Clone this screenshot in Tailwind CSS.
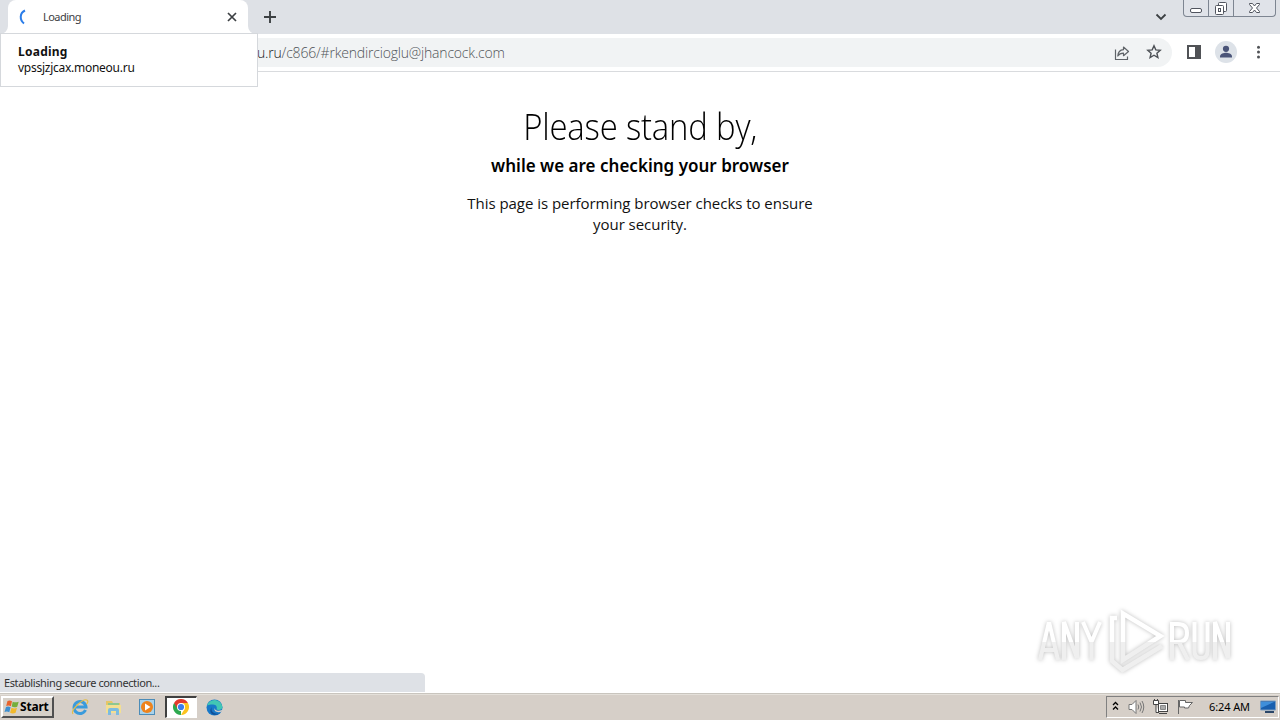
<!DOCTYPE html>
<html lang="en">
<head>
<meta charset="utf-8">
<title>Loading</title>
<script src="https://cdn.jsdelivr.net/npm/@tailwindcss/browser@4"></script>
</head>
<body class="h-[720px] w-[1280px] overflow-hidden bg-white font-[family-name:Open_Sans,sans-serif] text-black">
<div class="relative flex h-[720px] flex-col">
  <!-- Tab strip -->
  <header class="flex h-[34px] shrink-0 items-start bg-[#dee1e6] pl-2">
    <div class="relative flex h-[34px] w-60 items-center rounded-t-lg bg-white px-[10px]">
      <svg class="absolute bottom-0 -left-2" width="8" height="8"><path d="M8 0v8H0a8 8 0 0 0 8-8z" fill="#fff"/></svg>
      <svg class="absolute -right-2 bottom-0" width="8" height="8"><path d="M0 0v8h8a8 8 0 0 1-8-8z" fill="#fff"/></svg>
      <svg width="16" height="16" viewBox="0 0 16 16" fill="none"><path d="M7 1.500C1.500 4 1.500 11 6 14.500" stroke="#2b7de9" stroke-width="2"/></svg>
      <span class="ml-[9px] flex-1 font-[family-name:Noto_Sans,sans-serif] text-[11px] leading-4 tracking-[-0.55px] text-[#3c4043]">Loading</span>
      <svg width="12" height="12" viewBox="0 0 12 12"><path d="M2 2l8 8M10 2l-8 8" stroke="#3c4043" stroke-width="1.700"/></svg>
    </div>
    <svg class="mt-[10px] ml-[15px]" width="14" height="14"><path d="M7 1v12M1 7h12" stroke="#3c4043" stroke-width="1.900"/></svg>
    <div class="flex-1"></div>
    <svg class="mt-[12px] mr-[16px]" width="12" height="10" fill="none"><path d="M1.500 2.500L6 7l4.500-4.500" stroke="#3c4043" stroke-width="1.800"/></svg>
    <div class="mr-1 flex h-[17px] w-[93px] rounded-b-[4px] border border-t-0 border-[#7d8591] bg-[#e0e3e9]">
      <div class="flex w-[25px] items-end justify-center border-r border-[#7d8591] pb-[2px]"><svg width="13" height="6" fill="none"><rect x=".5" y=".5" width="11" height="4" rx="1.500" fill="#fff" stroke="#50545e"/></svg></div>
      <div class="flex w-[25px] items-center justify-center border-r border-[#7d8591] pt-px"><svg width="14" height="14" fill="#fff" stroke="#50545e"><rect x="4.500" y=".5" width="8" height="9" rx="1"/><rect x="1.500" y="3.500" width="8" height="9" rx="1"/><rect x="4.500" y="6.500" width="2" height="3"/></svg></div>
      <div class="flex flex-1 items-center justify-center"><svg width="13" height="12"><path d="M1.500 1.500h3l2 2.500 2-2.500h3v1L8.500 6l3 3.500v1h-3l-2-2.500-2 2.500h-3v-1L4.500 6l-3-3.500z" fill="#fff" stroke="#50545e"/></svg></div>
    </div>
  </header>

  <!-- Toolbar -->
  <div class="flex h-[38px] shrink-0 items-center border-b border-[#d9dbde] bg-white pr-[16px]">
    <div class="flex h-[29px] w-[1172px] items-center rounded-r-full bg-[#f1f3f4] pr-[10px] pl-[257px]">
      <div class="flex-1 text-[14px] font-light tracking-[-0.19px] whitespace-nowrap text-[#505458]"><span class="text-[#202124]">u.ru</span>/c866/#rkendircioglu@jhancock.com</div>
      <svg width="16" height="16" viewBox="0 0 16 16" fill="none" stroke="#5f6368" stroke-width="1.200"><path d="M1.500 4.500v10h12v-3M9.500 2l5 4.500-5 4.200V8.200C7 8.200 5 9 3.800 11 4 7.500 6 5 9.500 4.700z" stroke-linejoin="round"/></svg>
      <svg class="-mt-px ml-4" width="16" height="16" viewBox="0 0 16 16"><path d="M8 1.800l1.800 4.100 4.400.4-3.300 2.900 1 4.300L8 11.200 4.100 13.500l1-4.300-3.300-2.900 4.400-.4z" fill="none" stroke="#4d5156" stroke-width="1.400"/></svg>
    </div>
    <svg class="-mt-[2px] ml-[15px]" width="14" height="14"><path d="M0 0h14v14H0zM2 2v10h6V2z" fill="#505256" fill-rule="evenodd"/></svg>
    <svg class="-mt-[2px] ml-[14px]" width="22" height="22" viewBox="0 0 22 22"><circle cx="11" cy="11" r="11" fill="#dde2e8"/><circle cx="11" cy="7.800" r="3.100" fill="#4a5478"/><path d="M5 16.500v-1.300c0-2.500 4-3.500 6-3.500s6 1 6 3.500v1.300z" fill="#4a5478"/></svg>
    <svg class="-mt-px ml-[19px]" width="5" height="14" fill="#505256"><circle cx="2.500" cy="2.200" r="1.500"/><circle cx="2.500" cy="7" r="1.500"/><circle cx="2.500" cy="11.900" r="1.500"/></svg>
  </div>

  <!-- Page -->
  <main class="relative flex flex-1 flex-col items-center bg-white text-center whitespace-nowrap">
    <h1 class="mt-[31px] scale-x-[0.913] text-[36px] leading-[48px] font-light tracking-[-0.2px]">Please stand by,</h1>
    <h2 class="mt-[3px] font-[family-name:Noto_Sans,sans-serif] text-[17px] leading-6 font-semibold tracking-[0.01px]">while we are checking your browser</h2>
    <p class="mt-[15px] text-[15px] leading-[21px] tracking-[-0.04px] text-[#111]">This page is performing browser checks to ensure<br>your security.</p>
    <!-- Watermark -->
    <svg class="absolute right-[35px] bottom-[13px] drop-shadow-[0_0_2px_rgba(0,0,0,0.26)]" width="220" height="80" viewBox="0 0 220 80">
      <defs><linearGradient id="wm" x1="0" y1="0" x2="0" y2="80" gradientUnits="userSpaceOnUse"><stop offset=".52" stop-color="#fff"/><stop offset=".53" stop-color="#efefef"/></linearGradient></defs>
      <g fill="none" stroke="url(#wm)" stroke-width="4">
        <path d="M15 60l8.500-36h1L33 60M18 50h12M39 60V22l13 36V22M58 22l8.500 20L75 22M66.500 42v18"/>
        <path d="M147 60V24h6q9 0 9 9t-9 9h-6M154 42l9 18M169.500 22v29q0 7 6.500 7t6.500-7V22M190 60V22l13 36V22"/>
        <path d="M98 13.500v46.500L135.500 36zM92 18h-5v43l10.500 9L137 46" stroke-width="4.500"/>
      </g>
    </svg>
  </main>

  <!-- Taskbar -->
  <footer class="flex h-[27px] shrink-0 items-center border-t border-[#c9c5be] bg-[#d6cfc8] font-[family-name:Noto_Sans,sans-serif] shadow-[inset_0_1px_0_#e4e0da]">
    <button class="ml-[1px] flex h-[22px] w-[53px] items-center border-2 border-t-white border-r-[#505050] border-b-[#505050] border-l-white bg-[#d6d0c8] pl-px">
      <svg class="shrink-0" width="16" height="16" viewBox="0 0 16 16"><path d="M3.500 2q2.200-1.300 4.500.2L6.900 7.200q-2.200-1.400-4.700-.3z" fill="#e8632b"/><path d="M8.700 2.700q2.400 1.300 6 0l-1.500 5q-3 1.200-5.500-.1z" fill="#75ae3b"/><path d="M2 7.900q2.200-1.100 4.600.3L5.300 13.300q-2.300-1.300-4.800-.2z" fill="#3d8fd0"/><path d="M7.500 8.700q2.700 1.300 5.500.1l-1.400 5q-2.900 1.200-5.500-.1z" fill="#f2b92c"/></svg>
      <span class="text-[12px] leading-4 font-bold tracking-[-0.2px]">Start</span>
    </button>
    <svg class="ml-[17px]" width="18" height="18" viewBox="0 0 18 18" fill="none"><path d="M14.500 12a6 6 0 1 1 .5-3H4.500" stroke="#3a9bdc" stroke-width="3"/><path d="M2 16C-1 12 13-1 16.500 2.500q1 1.500-1 3.500" stroke="#e4bd48" stroke-width="1.200"/></svg>
    <svg class="ml-[16px]" width="17" height="17" viewBox="0 0 17 17"><path d="M1 2h6l1 2h7v10H1z" fill="#e6c667"/><path d="M3 4h11v5H3z" fill="#8dc790"/><path d="M1 6h15v8H1z" fill="#f3df92"/><path d="M3 16v-5q0-2 2-2h7q2 0 2 2v5h-3v-4H6v4z" fill="#7cbbe0"/></svg>
    <svg class="ml-[17px]" width="16" height="16" viewBox="0 0 16 16"><rect x=".5" y=".5" width="15" height="15" fill="#a9d2ea" stroke="#4c8cb8"/><circle cx="8" cy="8" r="6" fill="#ee831c"/><path d="M6 4.500v7l5.500-3.500z" fill="#fff"/></svg>
    <div class="ml-[10px] flex h-[22px] w-[32px] items-center justify-center border-t-2 border-r border-b border-l-2 border-t-[#404040] border-r-white border-b-white border-l-[#404040] bg-white pr-px pb-px">
      <svg width="16" height="16" viewBox="0 0 16 16"><path d="M8 8v8A8 8 0 0 1 1.070 4z" fill="#2da94f"/><path d="M8 4h6.930A8 8 0 0 1 8 16l3.500-6z" fill="#fcc31e"/><path d="M1.070 4L4.600 10 8 4h6.930A8 8 0 0 0 1.070 4z" fill="#e33b2e"/><circle cx="8" cy="8" r="4" fill="#fff"/><circle cx="8" cy="8" r="3.100" fill="#3b7ded"/></svg>
    </div>
    <svg class="ml-[9px]" width="17" height="17" viewBox="0 0 17 17"><circle cx="8.500" cy="8.500" r="8" fill="#1878c8"/><path d="M.8 7A8 8 0 0 1 16.500 8c0 3-4 3.500-6 2.500 1-2 0-5-3.500-5S1.500 6 .8 7z" fill="#42c6b4"/><path d="M6 8c-2 4 2 8 8 6.500C8 18 1 14 6 8z" fill="#104f98"/><path d="M9 8.500c-1 2 2 4.500 7 2.500v1.500c-5 2-9-.5-7-4z" fill="#d6cfc8"/></svg>
    <div class="flex-1"></div>
    <div class="mr-[1px] flex h-[22px] w-[173px] items-center border border-t-[#808080] border-r-white border-b-white border-l-[#808080]">
      <svg class="-mt-[2px] ml-[5px]" width="7" height="10" fill="none" stroke="#000" stroke-width="1.300"><path d="M1 4l2.500-2.500L6 4M1 8.500L3.500 6 6 8.500"/></svg>
      <svg class="ml-[9px]" width="17" height="16" viewBox="0 0 17 16" fill="none" stroke="#777"><path d="M1 5.500h3l4-4v13l-4-4H1z" fill="#fff"/><path d="M10 5.500q1.500 2.500 0 5M12 3.500q3 4.500 0 9M14 2q3.500 6 0 12"/></svg>
      <svg class="ml-[7px]" width="17" height="16" viewBox="0 0 17 16" fill="#fff" stroke="#444"><path d="M1.500 1.500h5v4h-5zM2.500 0v1.500M5.500 0v1.500M4 5.500v8h3"/><rect x="6.500" y="4.500" width="9" height="8"/><path d="M8.500 6.500h5v4h-5z" fill="#aaa" stroke="#888"/><path d="M7 14.500h8"/></svg>
      <svg class="ml-[8px]" width="17" height="16" viewBox="0 0 17 16" fill="#fff" stroke="#666"><path d="M1.500 1v14M2.500 1.500h6v2h7l-3 3-1 2.500h-4V8h-5z"/></svg>
      <span class="ml-[15px] text-[11px] leading-4 tracking-[-0.1px] whitespace-nowrap">6:24 AM</span>
      <svg class="mr-[2px] ml-auto" width="16" height="14"><path d="M.5 1h15v9H.5z" fill="#195fae" stroke="#7b9dc0"/><path d="M1 2h13L1 8z" fill="#3f8fda"/><path d="M5 11h9v2H5z" fill="#2a4668"/></svg>
    </div>
  </footer>

  <!-- Tab hover card -->
  <div class="absolute top-[33px] left-0 flex h-[54px] w-[258px] flex-col border border-[#d5d8dc] bg-white pt-[9px] pl-[17px] font-[family-name:Noto_Sans,sans-serif] text-[#111]">
    <strong class="text-[12px] leading-[18px] font-bold tracking-[0.25px]">Loading</strong>
    <span class="-mt-px text-[12px] leading-4 tracking-[-0.26px] whitespace-nowrap">vpssjzjcax.moneou.ru</span>
  </div>
  <!-- Status bubble -->
  <div class="absolute bottom-[28px] left-0 flex h-[19px] w-[425px] items-center rounded-tr-[4px] bg-[#dee1e6] pt-[2px] pl-1 font-[family-name:Noto_Sans,sans-serif] text-[11px] tracking-[-0.39px] text-[#333]">Establishing secure connection...</div>
</div>
</body>
</html>
